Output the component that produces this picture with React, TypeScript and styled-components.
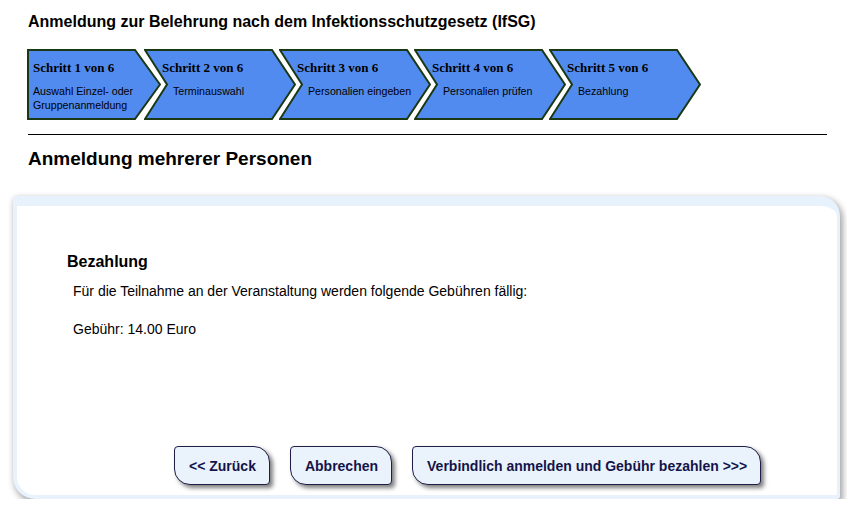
import React from "react";
import styled, { createGlobalStyle } from "styled-components";

const Global = createGlobalStyle`
  html, body { margin: 0; padding: 0; background: #ffffff; }
  body { font-family: "Liberation Sans", Arial, sans-serif; color: #000; }
`;

const Page = styled.div`
  width: 847px;
  padding-top: 12px;
`;

const Header = styled.header`
  padding-left: 28px;
  width: 799px;
`;

const Title = styled.h1`
  margin: 0;
  font-size: 16px;
  line-height: 20px;
  font-weight: bold;
`;

const Steps = styled.ol`
  list-style: none;
  margin: 17px 0 0 -1px;
  padding: 0;
  display: flex;
  height: 71px;
`;

const Step = styled.li<{ $first: boolean }>`
  position: relative;
  flex-shrink: 0;
  width: ${(p) => (p.$first ? 134 : 152)}px;
  height: 71px;
  margin-left: ${(p) => (p.$first ? 0 : -17)}px;
  padding: 11px 0 0 ${(p) => (p.$first ? 6 : 18)}px;
  box-sizing: border-box;
`;

const StepShape = styled.svg`
  position: absolute;
  left: 0;
  top: 0;
`;

const StepTitle = styled.div`
  position: relative;
  font-family: "Liberation Serif", "Times New Roman", serif;
  font-weight: bold;
  font-size: 13px;
  line-height: 15px;
`;

const StepLabel = styled.div<{ $first: boolean }>`
  position: relative;
  margin-top: 9px;
  padding-left: ${(p) => (p.$first ? 0 : 11)}px;
  width: 112px;
  font-size: 10.67px;
  line-height: 14px;
`;

const Rule = styled.hr`
  margin: 14px 0 0 0;
  border: 0;
  border-top: 1px solid #000;
  height: 0;
`;

const SubTitle = styled.h2`
  margin: 12px 0 0 0;
  font-size: 19px;
  line-height: 23px;
  font-weight: bold;
`;

const Panel = styled.section`
  margin: 26px 0 0 13px;
  width: 827px;
  height: 303px;
  box-sizing: border-box;
  background: #ffffff;
  border-style: solid;
  border-color: #e8f2fc;
  border-width: 10px 3px 4px 4px;
  border-radius: 3px 20px 3px 22px;
  box-shadow: 2px 3px 6px 1px rgba(0, 0, 0, 0.35);
  display: flex;
  flex-direction: column;
  padding: 46px 0 10px 50px;
`;

const SectionTitle = styled.h3`
  margin: 0;
  font-size: 16px;
  line-height: 20px;
  font-weight: bold;
`;

const Text = styled.p<{ $gap: number }>`
  margin: ${(p) => p.$gap}px 0 0 0;
  padding-left: 6px;
  font-size: 14px;
  line-height: 16px;
`;

const Actions = styled.div`
  margin-top: auto;
  display: flex;
  gap: 20px;
  padding-left: 107px;
`;

const Button = styled.button`
  height: 39px;
  padding: 0 13px 0 14px;
  background: #eaf3fc;
  border: 1px solid #1e1e46;
  border-radius: 4px 16px 4px 16px;
  box-shadow: 3px 3px 4px rgba(0, 0, 0, 0.5);
  font-family: "Liberation Sans", Arial, sans-serif;
  font-weight: bold;
  font-size: 14px;
  color: #14144a;
  cursor: pointer;
`;

const steps = [
  { title: "Schritt 1 von 6", label: "Auswahl Einzel- oder Gruppenanmeldung" },
  { title: "Schritt 2 von 6", label: "Terminauswahl" },
  { title: "Schritt 3 von 6", label: "Personalien eingeben" },
  { title: "Schritt 4 von 6", label: "Personalien prüfen" },
  { title: "Schritt 5 von 6", label: "Bezahlung" },
];

function shape(first: boolean): string {
  if (first) return "1,1 108,1 133,35.5 108,70 1,70";
  return "1,1 128,1 151,35.5 128,70 1,70 23,35.5";
}

export default function App() {
  return (
    <Page>
      <Global />
      <Header>
        <Title>Anmeldung zur Belehrung nach dem Infektionsschutzgesetz (IfSG)</Title>
        <Steps>
          {steps.map((s, i) => {
            const first = i === 0;
            const w = first ? 134 : 152;
            return (
              <Step key={s.title} $first={first}>
                <StepShape width={w} height={71} viewBox={`0 0 ${w} 71`}>
                  <polygon
                    points={shape(first)}
                    fill="#528bef"
                    stroke="#1b3814"
                    strokeWidth={2}
                    strokeLinejoin="miter"
                  />
                </StepShape>
                <StepTitle>{s.title}</StepTitle>
                <StepLabel $first={first}>{s.label}</StepLabel>
              </Step>
            );
          })}
        </Steps>
        <Rule />
        <SubTitle>Anmeldung mehrerer Personen</SubTitle>
      </Header>
      <Panel>
        <SectionTitle>Bezahlung</SectionTitle>
        <Text $gap={11}>Für die Teilnahme an der Veranstaltung werden folgende Gebühren fällig:</Text>
        <Text $gap={22}>Gebühr: 14.00 Euro</Text>
        <Actions>
          <Button>&lt;&lt; Zurück</Button>
          <Button>Abbrechen</Button>
          <Button>Verbindlich anmelden und Gebühr bezahlen &gt;&gt;&gt;</Button>
        </Actions>
      </Panel>
    </Page>
  );
}
